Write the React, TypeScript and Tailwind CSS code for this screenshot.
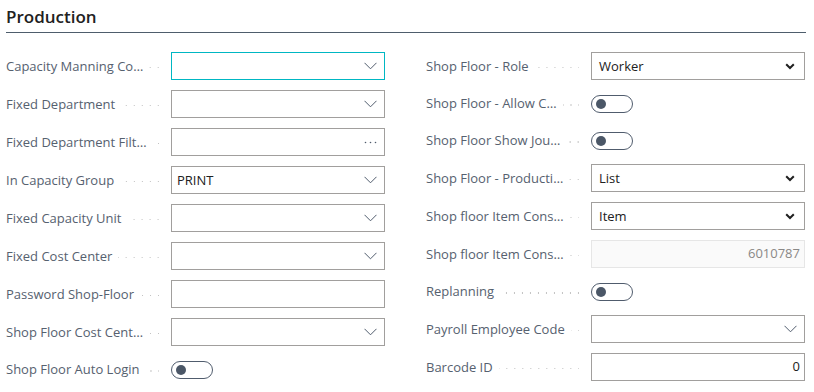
import React from "react";

type Kind = "lookup" | "assist" | "text" | "toggle" | "select" | "disabled" | "number";

type Field = {
  label: string;
  kind: Kind;
  value?: string;
  focused?: boolean;
};

const LEFT: Field[] = [
  { label: "Capacity Manning Co…", kind: "lookup", focused: true },
  { label: "Fixed Department", kind: "lookup" },
  { label: "Fixed Department Filt…", kind: "assist" },
  { label: "In Capacity Group", kind: "lookup", value: "PRINT" },
  { label: "Fixed Capacity Unit", kind: "lookup" },
  { label: "Fixed Cost Center", kind: "lookup" },
  { label: "Password Shop-Floor", kind: "text" },
  { label: "Shop Floor Cost Cent…", kind: "lookup" },
  { label: "Shop Floor Auto Login", kind: "toggle" },
];

const RIGHT: Field[] = [
  { label: "Shop Floor - Role", kind: "select", value: "Worker" },
  { label: "Shop Floor - Allow C…", kind: "toggle" },
  { label: "Shop Floor Show Jou…", kind: "toggle" },
  { label: "Shop Floor - Producti…", kind: "select", value: "List" },
  { label: "Shop floor Item Cons…", kind: "select", value: "Item" },
  { label: "Shop floor Item Cons…", kind: "disabled", value: "6010787" },
  { label: "Replanning", kind: "toggle" },
  { label: "Payroll Employee Code", kind: "lookup" },
  { label: "Barcode ID", kind: "number", value: "0" },
];

function ThinChevron() {
  return (
    <svg width="13" height="8" viewBox="0 0 13 8" className="shrink-0">
      <polyline points="0.5,0.8 6.5,6.8 12.5,0.8" fill="none" stroke="#505c6d" strokeWidth="1" />
    </svg>
  );
}

function BoldChevron() {
  return (
    <svg width="10" height="7" viewBox="0 0 10 7" className="shrink-0">
      <polyline points="1.2,1.2 5,5 8.8,1.2" fill="none" stroke="#212121" strokeWidth="2" />
    </svg>
  );
}

function Dots() {
  return (
    <svg width="13" height="3" viewBox="0 0 13 3" className="shrink-0">
      <circle cx="1.5" cy="1.5" r="0.8" fill="#505c6d" />
      <circle cx="6.5" cy="1.5" r="0.8" fill="#505c6d" />
      <circle cx="11.5" cy="1.5" r="0.8" fill="#505c6d" />
    </svg>
  );
}

function Toggle() {
  return (
    <div className="flex h-[18px] w-[42px] items-center rounded-full border border-[#505c6d] bg-white pl-[4px]">
      <div className="h-[10px] w-[10px] rounded-full bg-[#4b5767]" />
    </div>
  );
}

function Control({ f }: { f: Field }) {
  if (f.kind === "toggle") return <Toggle />;

  const base = "flex h-[28px] w-[214px] items-center border text-[13px]";

  if (f.kind === "disabled") {
    return (
      <div className={`${base} justify-end border-[#e6e6e6] bg-[#fafafa] pr-[4px] text-[#8a8886]`}>
        {f.value}
      </div>
    );
  }

  if (f.kind === "number") {
    return (
      <div className={`${base} justify-end border-[#a19f9d] bg-white pr-[4px] text-[#212121]`}>
        {f.value}
      </div>
    );
  }

  if (f.kind === "select") {
    return (
      <div className={`${base} justify-between border-[#a19f9d] bg-white pl-[7px] pr-[9px] text-[#212121]`}>
        <span className="pt-px">{f.value}</span>
        <BoldChevron />
      </div>
    );
  }

  const border = f.focused ? "border-[#00b7c3]" : "border-[#a19f9d]";
  return (
    <div className={`${base} justify-between ${border} bg-white pl-[5px] pr-[7px] text-[#212121]`}>
      <span className="pt-px">{f.value ?? ""}</span>
      {f.kind === "lookup" && <ThinChevron />}
      {f.kind === "assist" && <Dots />}
    </div>
  );
}

function Row({ f }: { f: Field }) {
  const h = f.kind === "toggle" ? "h-[37px]" : "h-[38px]";
  return (
    <div className={`flex items-center ${h}`}>
      <div className="flex w-[165px] shrink-0 items-center pt-px">
        <span className="whitespace-nowrap text-[13px] text-[#56616f]">{f.label}</span>
        <div className="ml-[6px] mr-[12px] mt-[2px] h-[1.5px] flex-1 bg-[linear-gradient(to_left,#c2c2c2_1.5px,transparent_1.5px)] bg-[length:8px_1.5px] bg-right bg-repeat-x" />
      </div>
      <Control f={f} />
    </div>
  );
}

export default function App() {
  return (
    <div
      className="h-[392px] w-[814px] overflow-hidden bg-white pl-[6px] pr-[8px]"
      style={{ fontFamily: '"Segoe UI", "Open Sans", "Noto Sans", sans-serif' }}
    >
      <div className="border-b border-[#4e5d6c] pb-[3px] pt-[5px] text-[17px] font-semibold leading-[24px] text-[#212121]">
        Production
      </div>
      <div className="mt-[14px] grid grid-cols-[379px_379px] gap-x-[41px]">
        <div className="flex flex-col">
          {LEFT.map((f, i) => (
            <Row key={i} f={f} />
          ))}
        </div>
        <div className="flex flex-col">
          {RIGHT.map((f, i) => (
            <Row key={i} f={f} />
          ))}
        </div>
      </div>
    </div>
  );
}
